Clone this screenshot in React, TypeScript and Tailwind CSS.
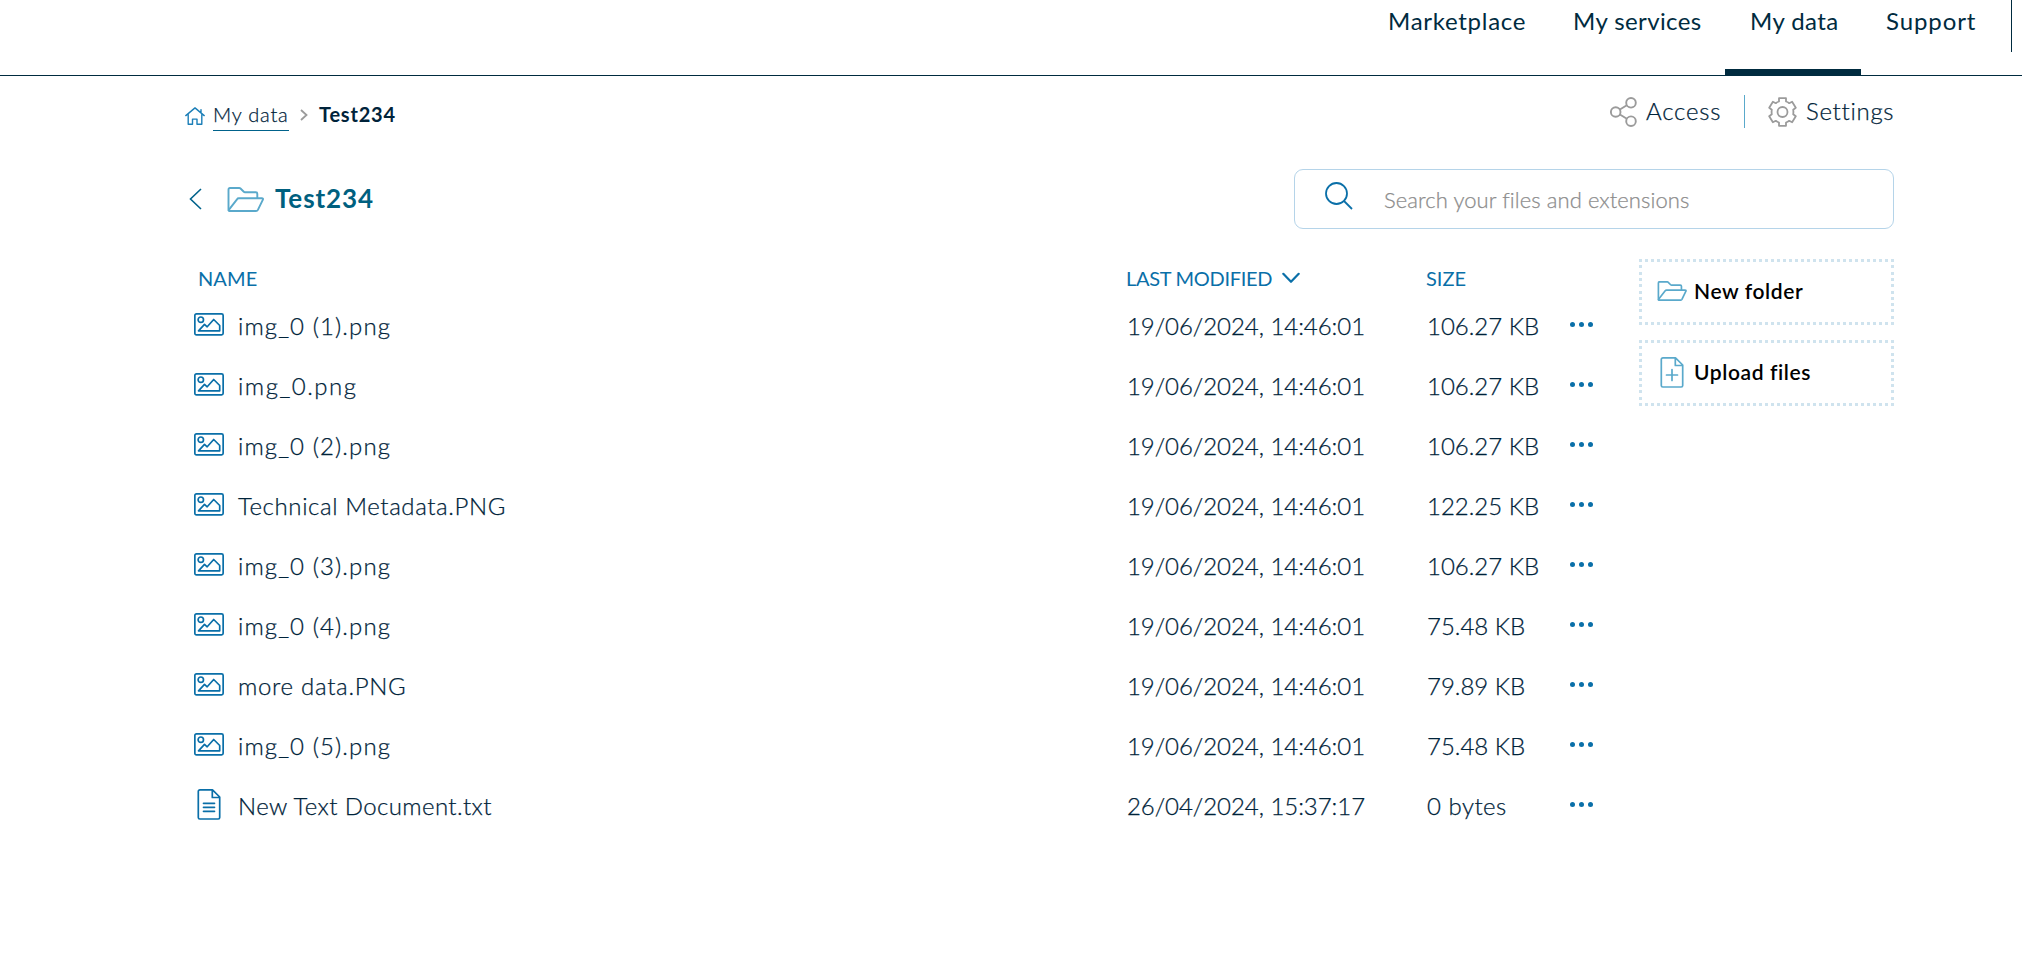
import type { ReactNode } from "react";

type FileKind = "image" | "text";

interface FileEntry {
  name: string;
  kind: FileKind;
  modified: string;
  size: string;
  tracking: string;
}

const files: FileEntry[] = [
  { name: "img_0 (1).png", kind: "image", modified: "19/06/2024, 14:46:01", size: "106.27 KB", tracking: "tracking-[1.1px]" },
  { name: "img_0.png", kind: "image", modified: "19/06/2024, 14:46:01", size: "106.27 KB", tracking: "tracking-[1.5px]" },
  { name: "img_0 (2).png", kind: "image", modified: "19/06/2024, 14:46:01", size: "106.27 KB", tracking: "tracking-[1.1px]" },
  { name: "Technical Metadata.PNG", kind: "image", modified: "19/06/2024, 14:46:01", size: "122.25 KB", tracking: "tracking-[0.6px]" },
  { name: "img_0 (3).png", kind: "image", modified: "19/06/2024, 14:46:01", size: "106.27 KB", tracking: "tracking-[1.1px]" },
  { name: "img_0 (4).png", kind: "image", modified: "19/06/2024, 14:46:01", size: "75.48 KB", tracking: "tracking-[1.1px]" },
  { name: "more data.PNG", kind: "image", modified: "19/06/2024, 14:46:01", size: "79.89 KB", tracking: "tracking-[0.7px]" },
  { name: "img_0 (5).png", kind: "image", modified: "19/06/2024, 14:46:01", size: "75.48 KB", tracking: "tracking-[1.1px]" },
  { name: "New Text Document.txt", kind: "text", modified: "26/04/2024, 15:37:17", size: "0 bytes", tracking: "tracking-[0.4px]" },
];

function HomeIcon() {
  return (
    <svg width="20" height="18" viewBox="0 0 20 18" fill="none" stroke="#1c7fb8" strokeWidth="1.4" strokeLinecap="round" strokeLinejoin="round">
      <path d="M.8 8.6 10 .9l9.200 7.700M16 5.800V2.600M3.200 7v10.200h4.300v-5.100h4.500v5.100h4.800V7" />
    </svg>
  );
}

function FolderIcon({ className, stroke }: { className: string; stroke: number }) {
  return (
    <svg className={className} viewBox="0 0 37 25" fill="none" stroke="#5aa9cb" strokeWidth={stroke} strokeLinecap="round" strokeLinejoin="round">
      <path d="M1.500 23V2.500Q1.500 1 3 1h9.200q.8 0 1.300.5l3.300 3.200q.5.500 1.200.500h10.800q1.500 0 1.500 1.500v4" />
      <path d="M2.500 24h26.500q1.300 0 1.900-1.100l5-10.200q.5-1.400-1-1.400H11.800q-1.200 0-1.800 1L2 22.600q-.8 1.400.5 1.400Z" />
    </svg>
  );
}

function ShareIcon() {
  return (
    <svg width="27" height="30" viewBox="0 0 27 30" fill="none" stroke="#9b9b9b" strokeWidth="1.900">
      <circle cx="5.700" cy="15" r="4.800" />
      <circle cx="21" cy="5.800" r="4.800" />
      <circle cx="21" cy="24.200" r="4.800" />
      <path d="m9.900 12.500 6.900-4.200M9.900 17.500l6.900 4.200" />
    </svg>
  );
}

function GearIcon() {
  return (
    <svg width="29" height="30" viewBox="0 0 29 30" fill="none" stroke="#9b9b9b" strokeWidth="1.800" strokeLinejoin="round">
      <path d="M11 1.200h7v3.300q1.700.5 3.200 1.700l2.900-1.400 3.700 5.900-2.600 2q.4 2.300 0 4.600l2.600 2-3.700 5.900-2.900-1.400q-1.500 1.200-3.200 1.700v3.300h-7v-3.300q-1.700-.5-3.200-1.700l-2.900 1.400-3.700-5.900 2.600-2q-.4-2.300 0-4.600l-2.600-2 3.700-5.900 2.900 1.400Q9.300 5 11 4.500Z" />
      <circle cx="14.500" cy="15" r="5" />
    </svg>
  );
}

function ImageIcon() {
  return (
    <svg width="30" height="23" viewBox="0 0 30 23" fill="none" stroke="#0a6fa8" strokeWidth="1.700" strokeLinejoin="round" strokeLinecap="round">
      <rect x=".85" y=".85" width="28.300" height="21.100" rx="1.600" />
      <circle cx="6.800" cy="6.700" r="2.700" />
      <path d="M4.500 17.800h21.200v-5.300l-6-6-6.500 7.300-2.700-2.500Z" />
    </svg>
  );
}

function DocumentIcon({ color, children }: { color: string; children: ReactNode }) {
  return (
    <svg width="24" height="31" viewBox="0 0 24 31" fill="none" stroke={color} strokeWidth="1.700" strokeLinejoin="round" strokeLinecap="round">
      <path d="M3 .9h12.500L22.700 8v20.500q0 1.500-1.500 1.500H2.800q-1.500 0-1.500-1.500v-26Q1.300.9 3 .9ZM15.300 1v7.500h7.400" />
      {children}
    </svg>
  );
}

function NavItem({ className, active, children }: { className: string; active?: boolean; children: ReactNode }) {
  return (
    <a className={`flex h-[75px] flex-col justify-between pt-[6px] ${className}`}>
      <span className="pl-[25px] text-[24px] leading-[30px] font-normal">{children}</span>
      {active && <span className="h-[6px] bg-[#002b3f]" />}
    </a>
  );
}

function ActionButton({ className, children }: { className: string; children: ReactNode }) {
  return (
    <button
      className={`flex h-[66px] items-center bg-[image:repeating-linear-gradient(90deg,#cfe3ee_0_3px,transparent_3px_6px),repeating-linear-gradient(90deg,#cfe3ee_0_3px,transparent_3px_6px),repeating-linear-gradient(180deg,#cfe3ee_0_3px,transparent_3px_6.3px),repeating-linear-gradient(180deg,#cfe3ee_0_3px,transparent_3px_6.3px)] bg-[size:100%_3px,100%_3px,3px_100%,3px_100%] bg-[position:top_left,bottom_left,top_left,top_right] bg-no-repeat pb-[2px] ${className}`}
    >
      {children}
    </button>
  );
}

export default function App() {
  return (
    <div className="h-[978px] w-[2022px] overflow-hidden bg-white font-['Lato',sans-serif] text-[#00233a]">
      <header className="flex h-[76px] justify-end border-b border-[#002b3f] pr-[10px]">
        <nav className="flex text-[#002b3f]">
          <NavItem className="w-[185px] tracking-[0.72px]">Marketplace</NavItem>
          <NavItem className="w-[177px] tracking-[0.4px]">My services</NavItem>
          <NavItem className="w-[136px] tracking-[0.4px]" active>My data</NavItem>
          <NavItem className="w-[150px] tracking-[0.9px]">Support</NavItem>
        </nav>
        <div className="h-[52px] w-px bg-[#002b3f]" />
      </header>

      <main className="pr-[128px] pl-[183px]">
        <div className="flex h-[93px] items-start justify-between">
          <div className="flex items-center pt-[22px] text-[20px] leading-[30px]">
            <span className="ml-[2px] pt-[2px]"><HomeIcon /></span>
            <a className="ml-[8px] h-[33px] w-[76px] border-b border-[#00628b] pt-px leading-[30px] font-light tracking-[0.8px] whitespace-nowrap [-webkit-text-stroke:0.25px]">My data</a>
            <svg className="ml-[11px]" width="8" height="12" viewBox="0 0 8 12" fill="none" stroke="#9b9b9b" strokeWidth="1.800">
              <path d="m1 1 5.500 5L1 11" />
            </svg>
            <span className="ml-[11px] pb-px font-bold tracking-[0.8px]">Test234</span>
          </div>
          <div className="flex items-center pt-[19px] text-[24px] leading-[33px] font-light [-webkit-text-stroke:0.25px]">
            <ShareIcon />
            <span className="ml-[9px] w-[98px] pb-[2px] leading-[31px] tracking-[0.8px]">Access</span>
            <span className="h-[33px] w-px bg-[#5aa9cb]" />
            <span className="ml-[23px]"><GearIcon /></span>
            <span className="ml-[9px] w-[88px] pb-[2px] leading-[31px] tracking-[0.7px]">Settings</span>
          </div>
        </div>

        <div className="flex h-[60px] items-center justify-between">
          <div className="flex items-center">
            <svg className="ml-[6px]" width="13" height="22" viewBox="0 0 13 22" fill="none" stroke="#00628b" strokeWidth="1.600">
              <path d="M12 1 1.500 11 12 21" />
            </svg>
            <FolderIcon className="ml-[25px] h-[25px] w-[37px]" stroke={1.9} />
            <h1 className="ml-[11px] pb-[2px] text-[26px] leading-[32px] font-bold tracking-[0.9px] text-[#00607f]">Test234</h1>
          </div>
          <div className="flex h-[60px] w-[600px] items-center rounded-[9px] border border-[#b5d4e9] pl-[30px]">
            <svg className="mb-[6px]" width="28" height="28" viewBox="0 0 28 28" fill="none" stroke="#0a6fa8" strokeWidth="1.800">
              <circle cx="11.500" cy="11.500" r="10.500" />
              <path d="m19 19 8 8" />
            </svg>
            <span className="ml-[31px] pt-[2px] text-[22px] leading-[30px] font-light tracking-[0.08px] text-[#8c8c8c] [-webkit-text-stroke:0.25px]">Search your files and extensions</span>
          </div>
        </div>

        <div className="mt-[30px] flex">
          <div className="w-[1456px]">
            <div className="grid h-[38px] grid-cols-[943px_300px_auto] items-center text-[20px] leading-[30px] font-normal text-[#0a6fa8]">
              <span className="pl-[15px] tracking-[0.1px]">NAME</span>
              <span className="flex items-center tracking-[-0.3px]">
                LAST MODIFIED
                <svg className="ml-[10px]" width="18" height="12" viewBox="0 0 18 12" fill="none" stroke="#0a6fa8" strokeWidth="2.200" strokeLinecap="round" strokeLinejoin="round">
                  <path d="m1.300 1.800 7.700 8 7.700-8" />
                </svg>
              </span>
              <span>SIZE</span>
            </div>
            {files.map((file) => (
              <div key={file.name} className="grid h-[60px] grid-cols-[55px_889px_300px_143px_auto] items-center pb-[2px] text-[24px] leading-[30px] font-light [-webkit-text-stroke:0.25px]">
                <span className="flex w-[52px] items-center justify-center pb-[3px]">
                  {file.kind === "image" ? (
                    <ImageIcon />
                  ) : (
                    <DocumentIcon color="#0a6fa8">
                      <path d="M6.500 14.300h11M6.500 18.300h11M6.500 22.300h11" />
                    </DocumentIcon>
                  )}
                </span>
                <span className={file.tracking}>{file.name}</span>
                <span className="tracking-[-0.05px]">{file.modified}</span>
                <span className={file.size === "0 bytes" ? "tracking-[0.5px]" : ""}>{file.size}</span>
                <span className="flex gap-[4px] pb-[3px]">
                  <i className="size-[5px] rounded-full bg-[#0a6fa8]" />
                  <i className="size-[5px] rounded-full bg-[#0a6fa8]" />
                  <i className="size-[5px] rounded-full bg-[#0a6fa8]" />
                </span>
              </div>
            ))}
          </div>

          <aside className="flex w-[255px] flex-col gap-[15px] text-[21px] leading-[30px] font-semibold text-black">
            <ActionButton className="pl-[18px]">
              <FolderIcon className="h-[20px] w-[30px]" stroke={2.1} />
              <span className="ml-[7px] tracking-[0.6px]">New folder</span>
            </ActionButton>
            <ActionButton className="pl-[21px]">
              <DocumentIcon color="#5aa9cb">
                <path d="M12 12.500v11M6.500 18h11" />
              </DocumentIcon>
              <span className="ml-[10px] tracking-[0.6px]">Upload files</span>
            </ActionButton>
          </aside>
        </div>
      </main>
    </div>
  );
}
